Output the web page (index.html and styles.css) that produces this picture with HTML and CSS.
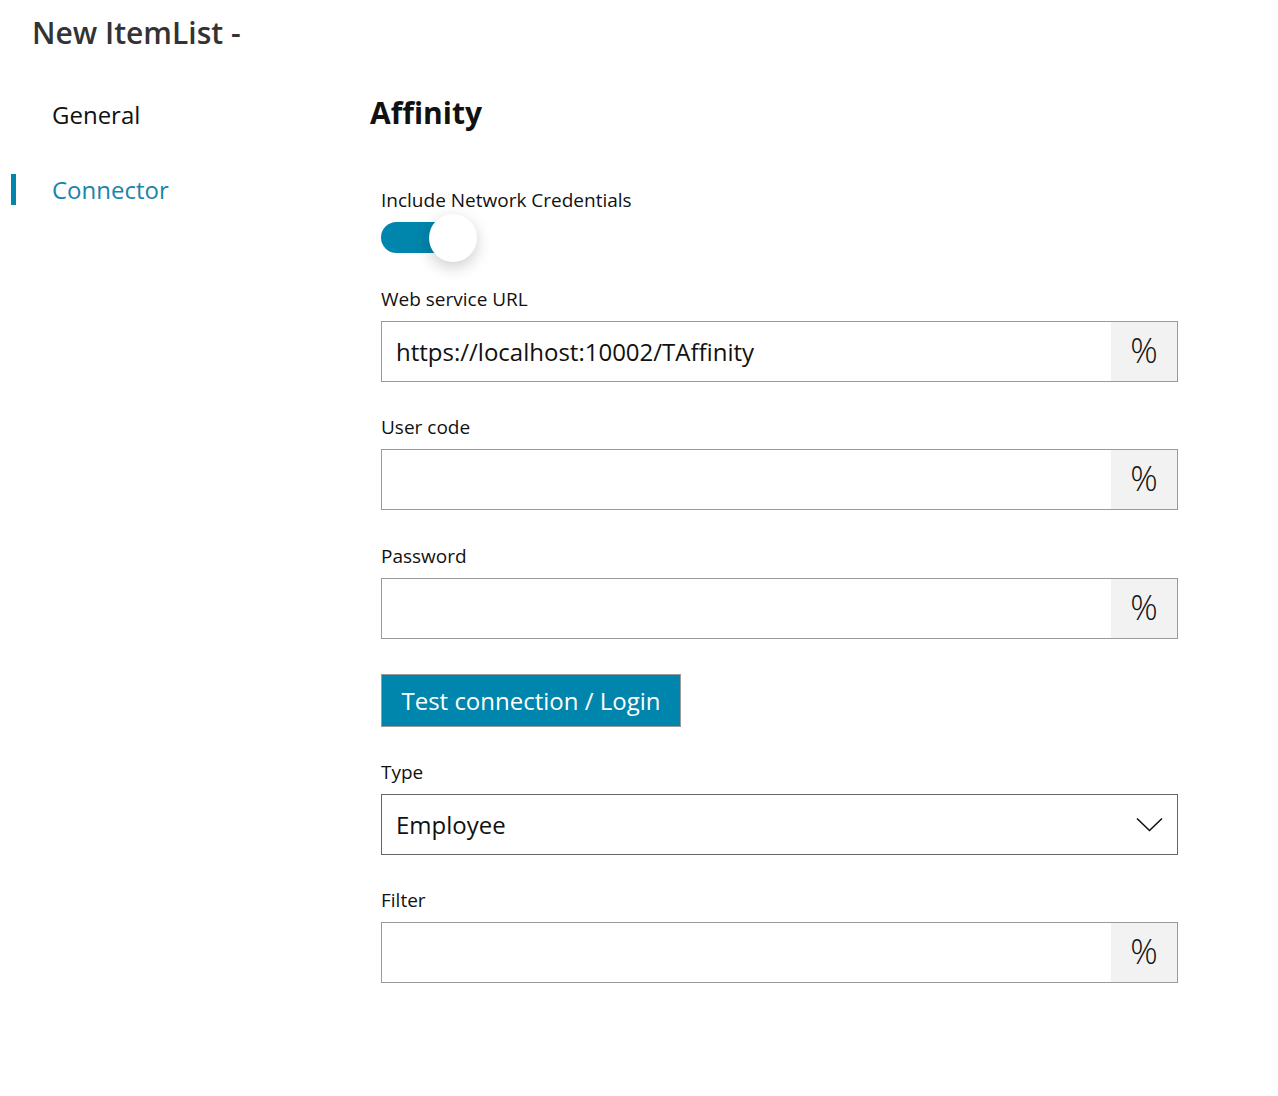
FILE: index.html
```html
<!DOCTYPE html>
<html>
<head>
<meta charset="utf-8">
<link rel="stylesheet" href="styles.css">
</head>
<body>
<div class="page">
  <h1 class="title">New ItemList -</h1>
  <div class="layout">
    <nav class="nav">
      <div class="nav-item">General</div>
      <div class="nav-item active">Connector</div>
    </nav>
    <main class="main">
      <h2 class="section-title">Affinity</h2>
      <form class="form">
        <div class="field toggle-field">
          <label class="label">Include Network Credentials</label>
          <div class="toggle"><span class="knob"></span></div>
        </div>
        <div class="field">
          <label class="label">Web service URL</label>
          <div class="input-group">
            <div class="input">https://localhost:10002/TAffinity</div>
            <div class="addon">%</div>
          </div>
        </div>
        <div class="field field-wide">
          <label class="label">User code</label>
          <div class="input-group">
            <div class="input"></div>
            <div class="addon">%</div>
          </div>
        </div>
        <div class="field">
          <label class="label">Password</label>
          <div class="input-group">
            <div class="input"></div>
            <div class="addon">%</div>
          </div>
        </div>
        <div class="button-row">
          <button type="button" class="btn">Test connection / Login</button>
        </div>
        <div class="field">
          <label class="label">Type</label>
          <div class="select">
            <span class="select-value">Employee</span>
            <svg class="chevron" width="27" height="15" viewBox="0 0 27 15"><path d="M1 1.5 L13.5 13.5 L26 1.5" fill="none" stroke="#111" stroke-width="1.6"/></svg>
          </div>
        </div>
        <div class="field">
          <label class="label">Filter</label>
          <div class="input-group">
            <div class="input"></div>
            <div class="addon">%</div>
          </div>
        </div>
      </form>
    </main>
  </div>
</div>
</body>
</html>
```

FILE: styles.css
```css
* { box-sizing: border-box; }
html, body { margin: 0; padding: 0; background: #fff; }
body {
  font-family: "Open Sans", "Liberation Sans", sans-serif;
  color: #111;
}
.title {
  margin: 0;
  padding: 12px 0 0 32px;
  font-size: 30px;
  font-weight: 600;
  color: #333;
  line-height: 42px;
}
.layout {
  display: flex;
  margin-top: 45px;
}
.nav {
  width: 370px;
  flex: none;
  display: flex;
  flex-direction: column;
  gap: 43px;
}
.nav-item {
  position: relative;
  padding-left: 52px;
  font-size: 24px;
  line-height: 32px;
  color: #111;
}
.nav-item.active { color: #1a84ab; }
.nav-item.active::before {
  content: "";
  position: absolute;
  left: 11px;
  top: 0;
  width: 5px;
  height: 31px;
  background: #0085ad;
}
.main { flex: 1; padding-right: 100px; }
.section-title {
  margin: 0;
  font-size: 30px;
  font-weight: 700;
  line-height: 40px;
  color: #111;
  margin-top: -6px;
}
.form {
  display: flex;
  flex-direction: column;
  padding-left: 11px;
  margin-top: 53px;
}
.field { margin-bottom: 31px; }
.field-wide { margin-bottom: 32px; }
.toggle-field { margin-bottom: 32px; }
.label {
  display: block;
  font-size: 19px;
  line-height: 28px;
  height: 28px;
  margin-bottom: 8px;
  color: #111;
}
.toggle {
  position: relative;
  width: 72px;
  height: 31px;
  border-radius: 16px;
  background: #0085ad;
}
.knob {
  position: absolute;
  left: 48px;
  top: -8px;
  width: 48px;
  height: 48px;
  border-radius: 50%;
  background: #fff;
  box-shadow: 0 5px 16px rgba(0,0,0,0.2);
}
.input-group {
  display: flex;
  height: 61px;
  border: 1px solid #9a9a9a;
}
.input {
  flex: 1;
  padding-left: 14px;
  font-size: 24px;
  line-height: 59px;
  color: #111;
}
.addon {
  width: 66px;
  background: #f2f2f2;
  text-align: center;
  font-size: 34px;
  line-height: 57px;
  font-weight: 300;
  color: #111;
}
.button-row { margin-top: 4px; margin-bottom: 31px; }
.btn {
  display: block;
  font-family: inherit;
  height: 53px;
  width: 300px;
  border: 1px solid #9a9a9a;
  background: #0085ad;
  color: #fff;
  font-size: 24px;
  padding: 0;
  line-height: 50px;
}
.select {
  display: flex;
  align-items: center;
  justify-content: space-between;
  height: 61px;
  border: 1px solid #666;
  padding: 0 14px 0 14px;
  font-size: 24px;
}
.chevron { display: block; }
```
